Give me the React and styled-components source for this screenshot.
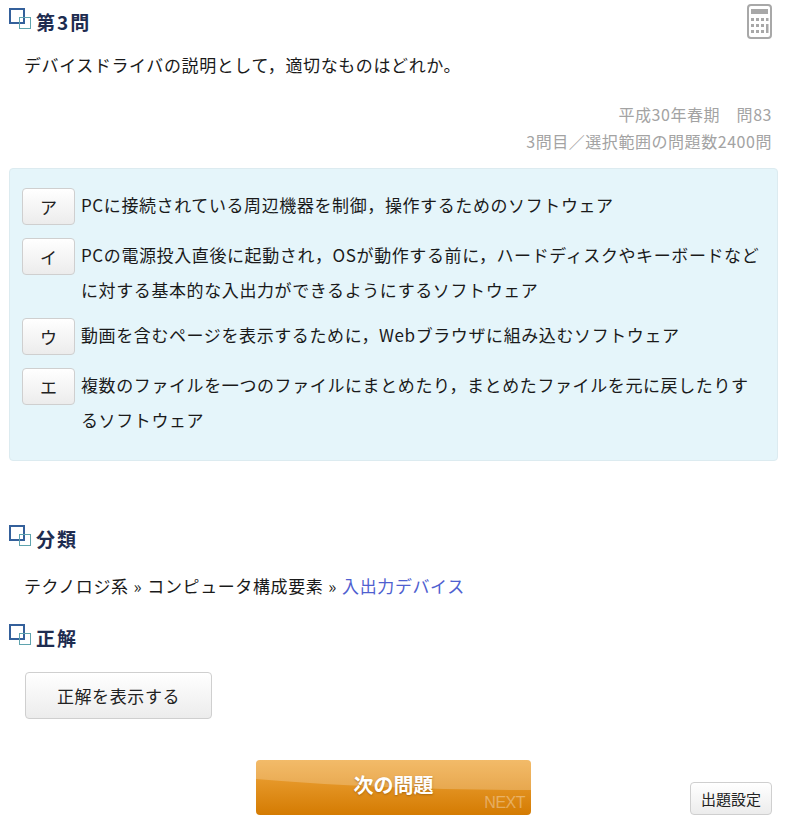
import React from "react";
import styled, { createGlobalStyle } from "styled-components";

const GlobalStyle = createGlobalStyle`
  html, body {
    margin: 0;
    padding: 0;
    background: #fff;
  }
  body {
    font-family: "Noto Sans CJK JP", "Noto Sans", sans-serif;
    font-size: 17px;
    color: #1a1a1a;
    letter-spacing: 0.6px;
  }
`;

const Page = styled.div`
  width: 788px;
  height: 824px;
  overflow: hidden;
  box-sizing: border-box;
  padding: 0 10px 0 9px;
`;

const Heading = styled.h3`
  display: flex;
  align-items: center;
  height: ${(p) => p.$height || 32}px;
  margin: ${(p) => p.$margin || "0"};
  font-size: 19px;
  line-height: 1;
  font-weight: 700;
  letter-spacing: 2px;
  color: #1e2c50;
`;

const HeadingMark = styled.svg`
  width: 23px;
  height: 23px;
  margin-right: 4px;
  flex: none;
  position: relative;
  top: -2px;
`;

const TopRow = styled.div`
  display: flex;
  justify-content: space-between;
  align-items: flex-start;
  padding-top: 5px;
  height: 40px;
  box-sizing: border-box;
`;

const CalcButton = styled.svg`
  width: 25px;
  height: 35px;
  margin: -1px 6px 0 0;
`;

const Question = styled.p`
  margin: 9px 0 0 15px;
  line-height: 32px;
`;

const Meta = styled.div`
  margin-top: 20px;
  padding-right: 6px;
  text-align: right;
  font-size: 16px;
  letter-spacing: 0.55px;
  line-height: 27px;
  color: #a3a3a3;
`;

const ChoicePanel = styled.div`
  margin-top: 13px;
  height: 293px;
  box-sizing: border-box;
  padding: 18px 12px 0;
  background: #e5f5fa;
  border: 1px solid #dcebf0;
  border-radius: 4px;
`;

const ChoiceRow = styled.div`
  display: flex;
  min-height: 40px;
  margin-bottom: 10px;
`;

const KeyButton = styled.div`
  width: 53px;
  height: 37px;
  flex: none;
  margin: 1px 6px 0 0;
  box-sizing: border-box;
  display: flex;
  align-items: center;
  justify-content: center;
  background: linear-gradient(#ffffff, #ececec);
  border: 1px solid #cfcfcf;
  border-radius: 4px;
  font-size: 17px;
  color: #222;
  letter-spacing: 0;
`;

const ChoiceText = styled.div`
  flex: 1;
  line-height: 35px;
`;

const Breadcrumb = styled.p`
  margin: 17px 0 0 15px;
  line-height: 30px;
`;

const Sep = styled.span`
  margin: 0 5px;
`;

const CrumbLink = styled.span`
  color: #4f5fd0;
`;

const RevealButton = styled.div`
  width: 187px;
  height: 47px;
  margin: 19px 0 0 16px;
  box-sizing: border-box;
  display: flex;
  align-items: center;
  justify-content: center;
  background: linear-gradient(#ffffff, #ececec);
  border: 1px solid #cfcfcf;
  border-radius: 4px;
  font-size: 17px;
  color: #222;
`;

const Footer = styled.div`
  position: relative;
  margin-top: 41px;
  height: 55px;
  display: flex;
  justify-content: center;
`;

const NextButton = styled.div`
  position: relative;
  width: 275px;
  height: 55px;
  overflow: hidden;
  border-radius: 4px;
  display: flex;
  align-items: center;
  justify-content: center;
  background: linear-gradient(#f0a83f, #d47b02);
  color: #fff;
  font-size: 20px;
  font-weight: 700;
  letter-spacing: 0;
  text-shadow: 0 1px 2px rgba(120, 70, 0, 0.5);
`;

const Gloss = styled.svg`
  position: absolute;
  inset: 0;
  width: 100%;
  height: 100%;
`;

const NextLabel = styled.span`
  position: relative;
  top: -3px;
`;

const NextTag = styled.span`
  position: absolute;
  right: 6px;
  bottom: 3px;
  font-family: "Liberation Sans", sans-serif;
  font-size: 16px;
  font-weight: 400;
  letter-spacing: -0.5px;
  color: rgba(255, 255, 255, 0.35);
  text-shadow: none;
`;

const SettingsButton = styled.div`
  position: absolute;
  right: 6px;
  bottom: 0;
  width: 82px;
  height: 33px;
  box-sizing: border-box;
  display: flex;
  align-items: center;
  justify-content: center;
  background: linear-gradient(#ffffff, #ececec);
  border: 1px solid #cfcfcf;
  border-radius: 4px;
  font-size: 15px;
  letter-spacing: 0;
  color: #222;
`;

const Mark = () => (
  <HeadingMark viewBox="0 0 23 23">
    <rect x="1" y="1" width="14" height="14" fill="none" stroke="#34609b" strokeWidth="2" />
    <rect x="10.5" y="9.5" width="11" height="11" fill="none" stroke="#5fa3ae" strokeWidth="1" />
  </HeadingMark>
);

const Calculator = () => (
  <CalcButton viewBox="0 0 25 35">
    <rect x="1" y="1" width="23" height="33" rx="3" fill="#fff" stroke="#a8a8a8" strokeWidth="2" />
    <rect x="4" y="5" width="17" height="5" fill="#a8a8a8" />
    <g fill="#a8a8a8">
      <rect x="4" y="14" width="3" height="3" />
      <rect x="9" y="14" width="3" height="3" />
      <rect x="14" y="14" width="3" height="3" />
      <rect x="19" y="14" width="2.5" height="3" />
      <rect x="4" y="20" width="3" height="3" />
      <rect x="9" y="20" width="3" height="3" />
      <rect x="14" y="20" width="3" height="3" />
      <rect x="4" y="26" width="3" height="3" />
      <rect x="9" y="26" width="3" height="3" />
      <rect x="14" y="26" width="3" height="3" />
      <rect x="19" y="20" width="2.5" height="9" />
    </g>
  </CalcButton>
);

const choices = [
  { key: "ア", text: "PCに接続されている周辺機器を制御，操作するためのソフトウェア" },
  {
    key: "イ",
    text: "PCの電源投入直後に起動され，OSが動作する前に，ハードディスクやキーボードなどに対する基本的な入出力ができるようにするソフトウェア",
  },
  { key: "ウ", text: "動画を含むページを表示するために，Webブラウザに組み込むソフトウェア" },
  {
    key: "エ",
    text: "複数のファイルを一つのファイルにまとめたり，まとめたファイルを元に戻したりするソフトウェア",
  },
];

const App = () => (
  <Page>
    <GlobalStyle />
    <TopRow>
      <Heading>
        <Mark />
        第3問
      </Heading>
      <Calculator />
    </TopRow>
    <Question>デバイスドライバの説明として，適切なものはどれか。</Question>
    <Meta>
      平成30年春期　問83
      <br />
      3問目／選択範囲の問題数2400問
    </Meta>
    <ChoicePanel>
      {choices.map((c) => (
        <ChoiceRow key={c.key}>
          <KeyButton>{c.key}</KeyButton>
          <ChoiceText>{c.text}</ChoiceText>
        </ChoiceRow>
      ))}
    </ChoicePanel>
    <Heading $margin="61px 0 0">
      <Mark />
      分類
    </Heading>
    <Breadcrumb>
      テクノロジ系<Sep>»</Sep>コンピュータ構成要素<Sep>»</Sep>
      <CrumbLink>入出力デバイス</CrumbLink>
    </Breadcrumb>
    <Heading $margin="20px 0 0">
      <Mark />
      正解
    </Heading>
    <RevealButton>正解を表示する</RevealButton>
    <Footer>
      <NextButton>
        <Gloss viewBox="0 0 275 55" preserveAspectRatio="none">
          <path d="M0 0H275V30Q130 30 0 19Z" fill="#fff" opacity="0.22" />
        </Gloss>
        <NextLabel>次の問題</NextLabel>
        <NextTag>NEXT</NextTag>
      </NextButton>
      <SettingsButton>出題設定</SettingsButton>
    </Footer>
  </Page>
);

export default App;
